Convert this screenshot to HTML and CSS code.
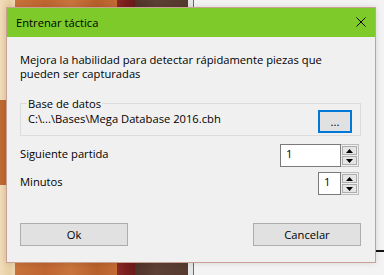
FILE: index.html
```html
<!DOCTYPE html>
<html lang="es">
<head>
<meta charset="utf-8">
<title>Entrenar táctica</title>
<link rel="stylesheet" href="styles.css">
</head>
<body>
<div class="desktop">
  <div class="sq cream-a"></div>
  <div class="sq orange-left"></div>
  <div class="sq cream-b"></div>
  <div class="sq orange"></div>
  <div class="sq red"></div>
  <div class="sq brown"></div>
  <div class="sq gap"></div>
  <div class="panel"></div>
  <div class="edge-line"></div>
</div>

<div class="dialog">
  <div class="titlebar">
    <span class="title">Entrenar táctica</span>
    <svg class="close" width="10" height="10" viewBox="0 0 10 10" aria-hidden="true">
      <path d="M0.5 0.5 L9.5 9.5 M9.5 0.5 L0.5 9.5" stroke="#000" stroke-width="1" fill="none"/>
    </svg>
  </div>
  <div class="client">
    <p class="desc">Mejora la habilidad para detectar rápidamente piezas que pueden ser capturadas</p>

    <fieldset class="group">
      <legend>Base de datos</legend>
      <div class="path-row">
        <span class="path">C:\...\Bases\Mega Database 2016.cbh</span>
        <button class="browse" type="button">...</button>
      </div>
    </fieldset>

    <div class="field-row first">
      <span class="label">Siguiente partida</span>
      <div class="spinner">
        <div class="spin-text wide">1</div>
        <div class="spin-btns">
          <span class="spin-btn"><svg width="7" height="4" viewBox="0 0 7 4"><polygon points="3.5,0 7,4 0,4" fill="#000"/></svg></span>
          <span class="spin-btn"><svg width="7" height="4" viewBox="0 0 7 4"><polygon points="0,0 7,0 3.5,4" fill="#000"/></svg></span>
        </div>
      </div>
    </div>

    <div class="field-row second">
      <span class="label">Minutos</span>
      <div class="spinner">
        <div class="spin-text narrow">1</div>
        <div class="spin-btns">
          <span class="spin-btn"><svg width="7" height="4" viewBox="0 0 7 4"><polygon points="3.5,0 7,4 0,4" fill="#000"/></svg></span>
          <span class="spin-btn"><svg width="7" height="4" viewBox="0 0 7 4"><polygon points="0,0 7,0 3.5,4" fill="#000"/></svg></span>
        </div>
      </div>
    </div>

    <div class="actions">
      <button class="btn" type="button">Ok</button>
      <button class="btn" type="button">Cancelar</button>
    </div>
  </div>
</div>
</body>
</html>
```

FILE: styles.css
```css
html, body {
  margin: 0;
  padding: 0;
}

body {
  width: 384px;
  height: 275px;
  overflow: hidden;
  position: relative;
  background: #f0f0f0;
  font-family: "Open Sans", "Noto Sans", sans-serif;
  font-size: 11.2px;
  color: #000;
}

/* ---------- desktop behind the dialog (free canvas) ---------- */
.desktop {
  position: absolute;
  inset: 0;
}

.sq {
  position: absolute;
}

.cream-a {
  left: 0; top: 0; width: 15px; height: 100px;
  background: linear-gradient(90deg, #f1dcb9, #e9cfa5 60%, #f0d8b2);
}

.orange-left {
  left: 0; top: 100px; width: 15px; height: 85px;
  background: linear-gradient(90deg, #c06a33, #b75f2b);
}

.cream-b {
  left: 0; top: 185px; width: 15px; height: 90px;
  background: linear-gradient(90deg, #f1dcb9, #e8cea4 60%, #efd7b1);
}

.orange {
  left: 15px; top: 0; width: 102px; height: 275px;
  background: linear-gradient(90deg, #c8713a, #bf6530 30%, #c9743c 55%, #b8602c 80%, #c46c35);
}

.red {
  left: 117px; top: 0; width: 18px; height: 275px;
  background: linear-gradient(90deg, #8c2a26, #7a1f1d 50%, #6a1c1a);
}

.brown {
  left: 135px; top: 0; width: 53px; height: 275px;
  background: linear-gradient(90deg, #4f332a, #5e4034 40%, #553a2f);
}

.gap {
  left: 188px; top: 0; width: 5px; height: 275px;
  background: #e6e6e6;
}

.panel {
  position: absolute;
  left: 193px; top: 0; width: 191px; height: 275px;
  background: #f3f3f3;
  border-left: 1px solid #6a6a6a;
  box-sizing: border-box;
}

.edge-line {
  position: absolute;
  left: 376px; top: 250px; width: 8px; height: 2px;
  background: #141414;
}

/* ---------- dialog window ---------- */
.dialog {
  position: absolute;
  left: 6px;
  top: 7px;
  width: 370px;
  box-sizing: border-box;
  border: 1px solid #c9a193;
  background: #f0f0f0;
  box-shadow: 0 0 6px rgba(0, 0, 0, 0.12);
  display: flex;
  flex-direction: column;
}

.titlebar {
  height: 29px;
  background: #7dca2a;
  display: flex;
  align-items: center;
  justify-content: space-between;
  padding-left: 9px;
  padding-right: 9px;
}

.title {
  line-height: 14px;
  padding-top: 1px;
}

.close {
  display: block;
  margin-top: -1px;
}

.client {
  height: 225px;
  box-sizing: border-box;
  padding: 16px 14px 0 13px;
  display: flex;
  flex-direction: column;
}

.desc {
  margin: 0;
  width: 332px;
  line-height: 14px;
}

/* ---------- group box ---------- */
.group {
  margin: 16px 0 0 0;
  padding: 0 7px 2px 7px;
  border: 1px solid #dcdcdc;
  min-width: 0;
}

.group legend {
  padding: 0 1px;
  margin-left: -1px;
  line-height: 13px;
}

.path-row {
  display: flex;
  align-items: flex-start;
  justify-content: space-between;
  height: 23px;
}

.path {
  margin-top: 2px;
  line-height: 14px;
}

.browse {
  width: 34px;
  height: 23px;
  box-sizing: border-box;
  border: 2px solid #0078d7;
  background: #e1e1e1;
  font: inherit;
  line-height: 14px;
  color: #000;
  padding: 0;
  margin-right: 1px;
}

/* ---------- numeric rows ---------- */
.field-row {
  display: flex;
  align-items: flex-start;
  justify-content: space-between;
  height: 23px;
}

.field-row.first {
  margin-top: 8px;
}

.field-row.second {
  margin-top: 5px;
}

.label {
  margin-top: 3px;
  line-height: 14px;
}

.spinner {
  display: flex;
  height: 23px;
  margin-right: 2px;
}

.spin-text {
  box-sizing: border-box;
  height: 23px;
  border: 1px solid #7a7a7a;
  background: #fff;
  padding: 2px 0 0 5px;
  line-height: 14px;
}

.spin-text.wide {
  width: 61px;
}

.spin-text.narrow {
  width: 23px;
}

.spin-btns {
  box-sizing: border-box;
  width: 18px;
  height: 23px;
  border: 1px solid #bdbdbd;
  border-left: 0;
  padding: 1px;
  display: flex;
  flex-direction: column;
  gap: 1px;
  background: #f0f0f0;
}

.spin-btn {
  flex: 1;
  box-sizing: border-box;
  border: 1px solid #adadad;
  background: #e5e5e5;
  display: flex;
  align-items: center;
  justify-content: center;
}

.spin-btn svg {
  display: block;
}

/* ---------- action buttons ---------- */
.actions {
  margin-top: 28px;
  display: flex;
  justify-content: space-between;
}

.btn {
  width: 108px;
  height: 23px;
  box-sizing: border-box;
  border: 1px solid #adadad;
  background: #e1e1e1;
  font: inherit;
  line-height: 14px;
  color: #000;
  padding: 0;
}
```
